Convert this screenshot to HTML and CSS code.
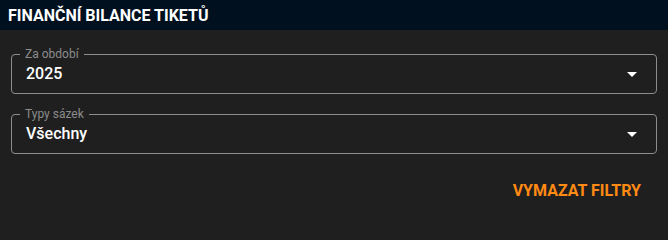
FILE: index.html
```html
<!DOCTYPE html>
<html lang="cs">
<head>
<meta charset="utf-8">
<title>Finanční bilance tiketů</title>
<link rel="stylesheet" href="styles.css">
</head>
<body>
<div class="panel">
  <header class="panel-header">
    <h2 class="panel-title">Finanční bilance tiketů</h2>
  </header>
  <div class="panel-body">
    <fieldset class="field">
      <legend class="field-label">Za období</legend>
      <div class="field-value">
        <span>2025</span>
        <svg class="arrow" viewBox="0 0 24 24" width="24" height="24"><path d="M7 10l5 5 5-5z" fill="#ffffff"/></svg>
      </div>
    </fieldset>
    <fieldset class="field field-second">
      <legend class="field-label">Typy sázek</legend>
      <div class="field-value">
        <span>Všechny</span>
        <svg class="arrow" viewBox="0 0 24 24" width="24" height="24"><path d="M7 10l5 5 5-5z" fill="#ffffff"/></svg>
      </div>
    </fieldset>
    <div class="actions">
      <button class="btn-clear" type="button">Vymazat filtry</button>
    </div>
  </div>
</div>
</body>
</html>
```

FILE: styles.css
```css
html, body {
  margin: 0;
  padding: 0;
  background: #1f1f1f;
  font-family: Roboto, "Liberation Sans", Arial, sans-serif;
}

.panel {
  width: 668px;
  height: 207px;
  background: #1f1f1f;
  overflow: hidden;
}

.panel-header {
  height: 30px;
  background: #00101f;
  display: flex;
  align-items: center;
  padding: 0 8px;
  box-sizing: border-box;
}

.panel-title {
  margin: 0;
  font-size: 16px;
  font-weight: 700;
  color: #ffffff;
  text-transform: uppercase;
  letter-spacing: 0;
}

.panel-body {
  padding: 18px 11px 0;
}

.field {
  margin: 0;
  padding: 0 8px;
  border: 1px solid #8c8c8c;
  border-radius: 4px;
  min-width: 0;
}

.field-second {
  margin-top: 14px;
}

.field-label {
  padding: 0 5px;
  font-size: 12px;
  line-height: 12px;
  color: #8c8c8c;
}

.field-value {
  display: flex;
  align-items: center;
  justify-content: space-between;
  padding: 2px 4px 8px 6px;
  height: 23px;
  font-size: 16px;
  font-weight: 500;
  color: #ffffff;
}

.arrow {
  display: block;
}

.actions {
  display: flex;
  justify-content: flex-end;
  padding: 21px 8px 0 0;
}

.btn-clear {
  background: none;
  border: 0;
  padding: 6px 8px;
  font-family: inherit;
  font-size: 16px;
  font-weight: 700;
  text-transform: uppercase;
  color: #ff8a14;
  cursor: pointer;
}
```
